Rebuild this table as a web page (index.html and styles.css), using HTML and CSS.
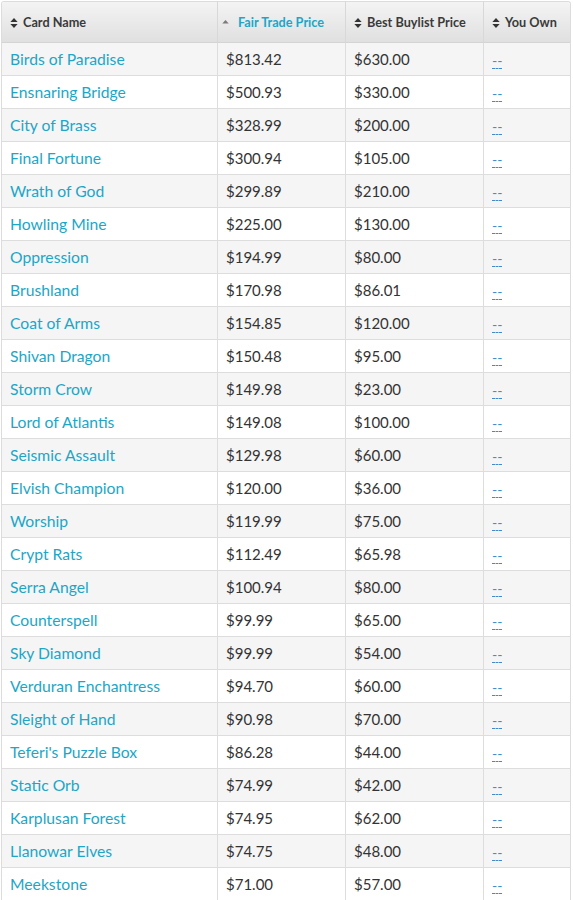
FILE: index.html
```html
<!DOCTYPE html>
<html>
<head>
<meta charset="utf-8">
<link rel="stylesheet" href="styles.css">
</head>
<body>
<div class="wrap">
<table class="prices">
<colgroup>
<col class="c1"><col class="c2"><col class="c3"><col class="c4">
</colgroup>
<thead>
<tr>
<th><svg class="sort" viewBox="0 0 8 11"><path d="M4 0 L8 4.5 H0 Z M4 11 L8 6.5 H0 Z" fill="#333"/></svg>Card Name</th>
<th class="active"><svg class="asc" viewBox="0 0 8 5"><path d="M4 0 L8 4.5 H0 Z" fill="#7a7a7a"/></svg>Fair Trade Price</th>
<th><svg class="sort" viewBox="0 0 8 11"><path d="M4 0 L8 4.5 H0 Z M4 11 L8 6.5 H0 Z" fill="#333"/></svg>Best Buylist Price</th>
<th><svg class="sort" viewBox="0 0 8 11"><path d="M4 0 L8 4.5 H0 Z M4 11 L8 6.5 H0 Z" fill="#333"/></svg>You Own</th>
</tr>
</thead>
<tbody>
<tr><td><a href="#">Birds of Paradise</a></td><td>$813.42</td><td>$630.00</td><td><a class="own" href="#">--</a></td></tr>
<tr><td><a href="#">Ensnaring Bridge</a></td><td>$500.93</td><td>$330.00</td><td><a class="own" href="#">--</a></td></tr>
<tr><td><a href="#">City of Brass</a></td><td>$328.99</td><td>$200.00</td><td><a class="own" href="#">--</a></td></tr>
<tr><td><a href="#">Final Fortune</a></td><td>$300.94</td><td>$105.00</td><td><a class="own" href="#">--</a></td></tr>
<tr><td><a href="#">Wrath of God</a></td><td>$299.89</td><td>$210.00</td><td><a class="own" href="#">--</a></td></tr>
<tr><td><a href="#">Howling Mine</a></td><td>$225.00</td><td>$130.00</td><td><a class="own" href="#">--</a></td></tr>
<tr><td><a href="#">Oppression</a></td><td>$194.99</td><td>$80.00</td><td><a class="own" href="#">--</a></td></tr>
<tr><td><a href="#">Brushland</a></td><td>$170.98</td><td>$86.01</td><td><a class="own" href="#">--</a></td></tr>
<tr><td><a href="#">Coat of Arms</a></td><td>$154.85</td><td>$120.00</td><td><a class="own" href="#">--</a></td></tr>
<tr><td><a href="#">Shivan Dragon</a></td><td>$150.48</td><td>$95.00</td><td><a class="own" href="#">--</a></td></tr>
<tr><td><a href="#">Storm Crow</a></td><td>$149.98</td><td>$23.00</td><td><a class="own" href="#">--</a></td></tr>
<tr><td><a href="#">Lord of Atlantis</a></td><td>$149.08</td><td>$100.00</td><td><a class="own" href="#">--</a></td></tr>
<tr><td><a href="#">Seismic Assault</a></td><td>$129.98</td><td>$60.00</td><td><a class="own" href="#">--</a></td></tr>
<tr><td><a href="#">Elvish Champion</a></td><td>$120.00</td><td>$36.00</td><td><a class="own" href="#">--</a></td></tr>
<tr><td><a href="#">Worship</a></td><td>$119.99</td><td>$75.00</td><td><a class="own" href="#">--</a></td></tr>
<tr><td><a href="#">Crypt Rats</a></td><td>$112.49</td><td>$65.98</td><td><a class="own" href="#">--</a></td></tr>
<tr><td><a href="#">Serra Angel</a></td><td>$100.94</td><td>$80.00</td><td><a class="own" href="#">--</a></td></tr>
<tr><td><a href="#">Counterspell</a></td><td>$99.99</td><td>$65.00</td><td><a class="own" href="#">--</a></td></tr>
<tr><td><a href="#">Sky Diamond</a></td><td>$99.99</td><td>$54.00</td><td><a class="own" href="#">--</a></td></tr>
<tr><td><a href="#">Verduran Enchantress</a></td><td>$94.70</td><td>$60.00</td><td><a class="own" href="#">--</a></td></tr>
<tr><td><a href="#">Sleight of Hand</a></td><td>$90.98</td><td>$70.00</td><td><a class="own" href="#">--</a></td></tr>
<tr><td><a href="#">Teferi's Puzzle Box</a></td><td>$86.28</td><td>$44.00</td><td><a class="own" href="#">--</a></td></tr>
<tr><td><a href="#">Static Orb</a></td><td>$74.99</td><td>$42.00</td><td><a class="own" href="#">--</a></td></tr>
<tr><td><a href="#">Karplusan Forest</a></td><td>$74.95</td><td>$62.00</td><td><a class="own" href="#">--</a></td></tr>
<tr><td><a href="#">Llanowar Elves</a></td><td>$74.75</td><td>$48.00</td><td><a class="own" href="#">--</a></td></tr>
<tr><td><a href="#">Meekstone</a></td><td>$71.00</td><td>$57.00</td><td><a class="own" href="#">--</a></td></tr>
</tbody>
</table>
</div>
</body>
</html>
```

FILE: styles.css
```css
html, body {
  margin: 0;
  padding: 0;
  background: #fff;
}
body {
  font-family: Lato, "Open Sans", sans-serif;
  color: #333;
}
.wrap {
  padding: 1px 0 0 1px;
  width: 570px;
}
.prices {
  width: 570px;
  border-collapse: separate;
  border-spacing: 0;
  table-layout: fixed;
  border: 1px solid #dcdcdc;
  border-bottom: none;
  border-radius: 3px 3px 0 0;
}
.c1 { width: 215px; }
.c2 { width: 128px; }
.c3 { width: 138px; }
.c4 { width: 87px; }
.prices th {
  height: 41px;
  box-sizing: border-box;
  padding: 0 0 0 8px;
  text-align: left;
  font-size: 12.7px;
  font-weight: 700;
  color: #3a3a3a;
  background: linear-gradient(#f4f4f4, #e0e0e0);
  border-bottom: 1px solid #d4d4d4;
  border-left: 1px solid #d8d8d8;
  white-space: nowrap;
  vertical-align: middle;
}
.prices th:first-child {
  border-left: none;
  border-radius: 3px 0 0 0;
}
.prices th:last-child {
  border-radius: 0 3px 0 0;
}
.prices th.active {
  color: #1ca6c7;
  padding-left: 4px;
}
.sort {
  width: 8px;
  height: 10px;
  margin-right: 5px;
  vertical-align: -1px;
}
.asc {
  width: 7px;
  height: 4px;
  margin-right: 9px;
  vertical-align: 3px;
}
.prices td {
  height: 33px;
  box-sizing: border-box;
  padding: 0 0 0 8px;
  font-size: 15px;
  color: #333;
  border-bottom: 1px solid #ddd;
  border-left: 1px solid #ddd;
  vertical-align: middle;
  white-space: nowrap;
}
.prices td:first-child {
  border-left: none;
  font-size: 15.7px;
}
.prices tbody tr:nth-child(odd) td {
  background: #f5f5f5;
}
.prices a {
  color: #1ca6c7;
  text-decoration: none;
}
.prices a.own {
  color: #428bca;
  font-size: 14px;
  display: inline-block;
  line-height: 15px;
  border-bottom: 1px dashed #428bca;
  margin-top: 0;
  vertical-align: middle;
}
```
